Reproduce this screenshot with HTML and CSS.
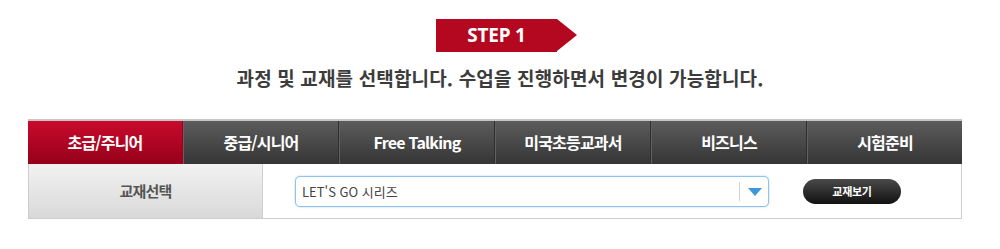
FILE: index.html
```html
<!DOCTYPE html>
<html lang="ko">
<head>
    <meta charset="UTF-8">
    <title>과정 선택</title>
    <link rel="stylesheet" href="styles.css">
</head>
<body>
    <div class="step-wrap">
        <div class="step">STEP 1</div>
    </div>
    <p class="guide">과정 및 교재를 선택합니다. 수업을 진행하면서 변경이 가능합니다.</p>

    <div class="course-box">
        <ul class="tabs">
            <li class="tab active">초급/주니어</li>
            <li class="tab">중급/시니어</li>
            <li class="tab">Free Talking</li>
            <li class="tab">미국초등교과서</li>
            <li class="tab">비즈니스</li>
            <li class="tab">시험준비</li>
        </ul>
        <div class="book-row">
            <div class="book-label">교재선택</div>
            <div class="book-pick">
                <div class="select">
                    <span class="select-text">LET'S GO 시리즈</span>
                    <span class="select-arrow"></span>
                </div>
                <a class="btn-view" href="#">교재보기</a>
            </div>
        </div>
    </div>
</body>
</html>
```

FILE: styles.css
```css
/* General */
body {
    margin: 0;
    background: #fff;
    font-family: "Noto Sans CJK KR", "Noto Sans", sans-serif;
    color: #333;
}

/* Step badge */
.step-wrap {
    display: flex;
    justify-content: center;
    padding: 19px 0 0 13px;
}

.step {
    position: relative;
    width: 121px;
    height: 33px;
    margin-right: 20px;
    background: #b3081f;
    color: #fff;
    font-family: "Noto Sans", sans-serif;
    font-weight: bold;
    font-size: 19px;
    line-height: 33px;
    text-align: center;
    letter-spacing: -0.2px;
}

.step::after {
    content: "";
    position: absolute;
    top: 0;
    left: 121px;
    border-left: 20px solid #b3081f;
    border-top: 16.5px solid transparent;
    border-bottom: 16.5px solid transparent;
}

.guide {
    margin: 13px 0 0;
    text-align: center;
    font-size: 19px;
    font-weight: bold;
    line-height: 25px;
    color: #3c3c3c;
    letter-spacing: 0.15px;
}

/* Course box */
.course-box {
    width: 934px;
    margin: 29px 0 0 28px;
    border-top: 2px solid #c6c6c6;
}

.tabs {
    display: flex;
    margin: 0;
    padding: 0;
    list-style: none;
}

.tab {
    flex: 1;
    height: 43px;
    line-height: 42px;
    text-align: center;
    color: #fff;
    font-size: 16px;
    font-weight: bold;
    letter-spacing: -0.8px;
    background: linear-gradient(to bottom, #5c5c5c, #353535);
    border-left: 1px solid #616161;
    border-right: 1px solid #2e2e2e;
    box-sizing: border-box;
}

.tab:first-child {
    border-left: none;
}

.tab:last-child {
    border-right: none;
}

.tab.active {
    background: linear-gradient(to bottom, #c90a2c, #96001a);
    border-color: #a0001c;
}

/* Book row */
.book-row {
    display: flex;
    height: 54px;
    border: 1px solid #cccccc;
    border-top: none;
}

.book-label {
    width: 233px;
    border-right: 1px solid #cfcfcf;
    background: linear-gradient(to bottom, #f2f2f2, #d9d9d9);
    color: #555;
    font-size: 15px;
    font-weight: bold;
    line-height: 54px;
    text-align: center;
    letter-spacing: -0.8px;
}

.book-pick {
    display: flex;
    align-items: center;
    padding-left: 32px;
    gap: 34px;
}

.select {
    display: flex;
    align-items: center;
    width: 474px;
    height: 31px;
    box-sizing: border-box;
    border: 1px solid #8cc4ec;
    border-radius: 5px;
    box-shadow: 0 0 2px rgba(110, 175, 230, 0.6);
    background: #fff;
}

.select-text {
    flex: 1;
    padding-left: 6px;
    font-size: 13px;
    color: #444;
}

.select-arrow {
    position: relative;
    width: 28px;
    height: 19px;
    border-left: 1px solid #d2d2d2;
}

.select-arrow::after {
    content: "";
    position: absolute;
    top: 6px;
    left: 8px;
    border-top: 8px solid #3d9ad6;
    border-left: 7px solid transparent;
    border-right: 7px solid transparent;
}

.btn-view {
    display: block;
    width: 98px;
    height: 25px;
    border-radius: 13px;
    background: linear-gradient(to bottom, #4a4a4a, #111);
    color: #fff;
    font-size: 11px;
    font-weight: bold;
    line-height: 25px;
    text-align: center;
    text-decoration: none;
    letter-spacing: -0.3px;
}
```
